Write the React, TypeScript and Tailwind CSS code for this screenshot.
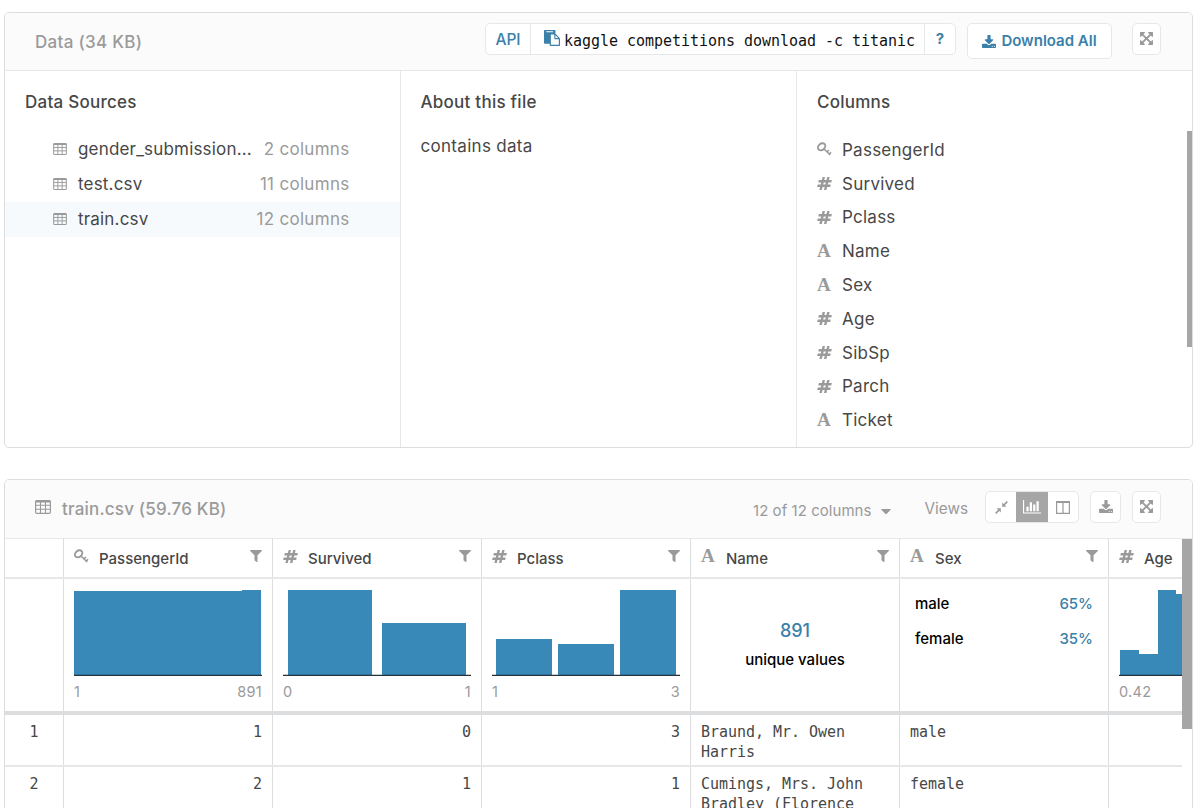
import type { ReactNode } from 'react'
import clsx from 'clsx'
import { FaCaretDown, FaFilter } from 'react-icons/fa'

type ColumnType = 'key' | 'number' | 'text'

const files = [
  { name: 'gender_submission...', columns: '2 columns' },
  { name: 'test.csv', columns: '11 columns' },
  { name: 'train.csv', columns: '12 columns' },
]

const columns: { name: string; type: ColumnType }[] = [
  { name: 'PassengerId', type: 'key' },
  { name: 'Survived', type: 'number' },
  { name: 'Pclass', type: 'number' },
  { name: 'Name', type: 'text' },
  { name: 'Sex', type: 'text' },
  { name: 'Age', type: 'number' },
  { name: 'SibSp', type: 'number' },
  { name: 'Parch', type: 'number' },
  { name: 'Ticket', type: 'text' },
]

const rows = [
  ['1', '1', '0', '3', 'Braund, Mr. Owen Harris', 'male', ''],
  ['2', '2', '1', '1', 'Cumings, Mrs. John Bradley (Florence', 'female', ''],
]

const grid = 'grid grid-cols-[59px_209px_209px_209px_209px_209px_209px]'

function TableIcon({ className }: { className?: string }) {
  return (
    <svg viewBox="0 0 16 14" className={className} fill="none" stroke="currentColor">
      <rect x="0.6" y="0.6" width="14.8" height="12.8" rx="1.2" strokeWidth="1.2" />
      <path d="M0.6 1.4h14.8" strokeWidth="2" />
      <path d="M0.6 5.2h14.8M0.6 9.2h14.8M5.5 1v12.5M10.5 1v12.5" strokeWidth="1.1" />
    </svg>
  )
}

function KeyIcon() {
  return (
    <svg viewBox="0 0 15 15" className="h-[15px] w-[15px]" fill="none" stroke="currentColor">
      <ellipse cx="4.6" cy="4.8" rx="3.1" ry="4" transform="rotate(50 4.6 4.8)" strokeWidth="1.9" />
      <path d="M7 7l6.2 6M9.6 10.4l2.2-2.4M11.8 12.6l2.2-2.4" strokeWidth="1.6" />
    </svg>
  )
}

function HashIcon() {
  return (
    <svg viewBox="32 128 1728 1536" className="h-[13px] w-[15px]" fill="currentColor">
      <path d="M991 1024l64-256h-254l-64 256h254zm768-504l-56 224q-7 24-31 24h-327l-64 256h311q15 0 25 12 10 14 6 28l-56 224q-5 24-31 24h-327l-81 328q-7 24-31 24h-224q-16 0-26-12-9-12-6-28l78-312h-254l-81 328q-7 24-31 24h-225q-15 0-25-12-9-12-6-28l78-312h-311q-15 0-25-12-9-12-6-28l56-224q7-24 31-24h327l64-256h-311q-15 0-25-12-10-14-6-28l56-224q5-24 31-24h327l81-328q7-24 32-24h224q15 0 25 12 9 12 6 28l-78 312h254l81-328q7-24 32-24h224q15 0 25 12 9 12 6 28l-78 312h311q15 0 25 12 9 12 6 28z" />
    </svg>
  )
}

function DownloadIcon() {
  return (
    <svg viewBox="64 0 1664 1536" className="h-[13px] w-[14px]" fill="currentColor">
      <path d="M1344 1344q0-26-19-45t-45-19-45 19-19 45 19 45 45 19 45-19 19-45zm256 0q0-26-19-45t-45-19-45 19-19 45 19 45 45 19 45-19 19-45zm128-224v320q0 40-28 68t-68 28h-1472q-40 0-68-28t-28-68v-320q0-40 28-68t68-28h465l135 136q58 56 136 56t136-56l136-136h464q40 0 68 28t28 68zm-325-569q17 41-14 70l-448 448q-18 19-45 19t-45-19l-448-448q-31-29-14-70 17-39 59-39h256v-448q0-26 19-45t45-19h256q26 0 45 19t19 45v448h256q42 0 59 39z" />
    </svg>
  )
}

function ExpandIcon() {
  return (
    <svg viewBox="128 128 1536 1536" className="h-[13px] w-[13px]" fill="currentColor">
      <path d="M1411 541l-355 355 355 355 144-144q29-31 70-14 39 17 39 59v448q0 26-19 45t-45 19h-448q-42 0-59-40-17-39 14-69l144-144-355-355-355 355 144 144q31 30 14 69-17 40-59 40h-448q-26 0-45-19t-19-45v-448q0-42 40-59 39-17 69 14l144 144 355-355-355-355-144 144q-19 19-45 19-12 0-24-5-40-17-40-59v-448q0-26 19-45t45-19h448q42 0 59 40 17 39-14 69l-144 144 355 355 355-355-144-144q-31-30-14-69 17-40 59-40h448q26 0 45 19t19 45v448q0 42-39 59-13 5-25 5-26 0-45-19z" />
    </svg>
  )
}

function PasteIcon() {
  return (
    <svg viewBox="0 0 1792 1792" className="-mt-0.5 mr-1 h-4 w-4 shrink-0 text-[#3b80a8]" fill="currentColor">
      <path d="M768 1664h896v-640h-416q-40 0-68-28t-28-68v-416h-384v1152zm256-1440v-64q0-13-9.5-22.5t-22.5-9.5h-704q-13 0-22.5 9.5t-9.5 22.5v64q0 13 9.5 22.5t22.5 9.5h704q13 0 22.5-9.5t9.5-22.5zm256 672h299l-299-299v299zm512 128v672q0 40-28 68t-68 28h-960q-40 0-68-28t-28-68v-160h-544q-40 0-68-28t-28-68v-1344q0-40 28-68t68-28h1088q40 0 68 28t28 68v328q21 13 36 28l408 408q28 28 48 76t20 88z" />
    </svg>
  )
}

function BarChartIcon() {
  return (
    <svg viewBox="0 128 2048 1536" className="h-[13.5px] w-[18px]" fill="currentColor">
      <path d="M640 896v512h-256v-512h256zm384-512v1024h-256v-1024h256zm1024 1152v128h-2048v-1536h128v1408h1920zm-640-896v768h-256v-768h256zm384-384v1152h-256v-1152h256z" />
    </svg>
  )
}

function CompressIcon() {
  return (
    <svg viewBox="0 0 13 13" className="h-[13px] w-[13px]" fill="currentColor">
      <path d="M7.2 1.6v4.2h4.2zM5.8 11.4V7.2H1.6z" />
      <path d="M8.5 4.5L12.3 0.7M4.5 8.5L0.7 12.3" stroke="currentColor" strokeWidth="1.7" />
    </svg>
  )
}

function ColumnsIcon() {
  return (
    <svg viewBox="0 0 14 13" className="h-[13px] w-[14px]" fill="none" stroke="currentColor" strokeWidth="1.2">
      <path d="M0.6 0.6h12.8v11.8H0.6zM7 0.6v11.8" />
      <path d="M0.6 1.2h12.8" strokeWidth="1.8" />
    </svg>
  )
}

function TypeIcon({ type }: { type: ColumnType }) {
  return (
    <span className="flex h-4 w-4 shrink-0 items-center text-[#9a9a9a]">
      {type === 'key' && <KeyIcon />}
      {type === 'number' && <HashIcon />}
      {type === 'text' && <span className="font-['Liberation_Serif',serif] text-[19px] leading-4 font-bold">A</span>}
    </span>
  )
}

function IconButton({ children, className }: { children: ReactNode; className?: string }) {
  return (
    <button className={clsx('flex h-8 items-center justify-center rounded-[5px] border border-[#e6e7e8] bg-white pb-0.5 text-[#9a9a9a]', className)}>
      {children}
    </button>
  )
}

type Bar = { x: number; y: number; w: number }

function Histogram({ bars, min, max }: { bars: Bar[]; min: string; max?: string }) {
  return (
    <div className="pt-2.5 pl-2.5">
      <svg width="188" height="88" viewBox="0 0 188 88" className="block">
        {bars.map((b) => (
          <rect key={b.x} x={b.x} y={b.y} width={b.w} height={86 - b.y} fill="#3888b8" shapeRendering="crispEdges" />
        ))}
        <path d="M0 86.4h188" stroke="#26333b" strokeWidth="1.3" />
      </svg>
      <div className="flex w-[188px] justify-between pt-[5px] text-[14.5px] leading-5 tracking-[0.3px] text-[#9a9a9a]">
        <span>{min}</span>
        {max && <span>{max}</span>}
      </div>
    </div>
  )
}

function ColumnSummary({ name }: { name: string }) {
  switch (name) {
    case 'PassengerId':
      return <Histogram min="1" max="891" bars={[{ x: 0, y: 2, w: 168 }, { x: 168, y: 1, w: 19 }]} />
    case 'Survived':
      return <Histogram min="0" max="1" bars={[{ x: 5, y: 1, w: 84 }, { x: 99, y: 34, w: 84 }]} />
    case 'Pclass':
      return <Histogram min="1" max="3" bars={[{ x: 4, y: 50, w: 56 }, { x: 66, y: 55, w: 56 }, { x: 128, y: 1, w: 56 }]} />
    case 'Name':
      return (
        <div className="flex flex-col items-center pt-10">
          <div className="text-[18px] leading-6 font-medium text-[#3b80a8]">891</div>
          <div className="mt-[7px] text-[15px] leading-5 font-medium text-black">unique values</div>
        </div>
      )
    case 'Sex':
      return (
        <div className="flex flex-col gap-[15px] px-[15px] pt-[15px] text-[15px] leading-5 font-medium">
          <div className="flex justify-between">
            <span className="text-black">male</span>
            <span className="text-[#3b80a8]">65%</span>
          </div>
          <div className="flex justify-between">
            <span className="text-black">female</span>
            <span className="text-[#3b80a8]">35%</span>
          </div>
        </div>
      )
    default:
      return (
        <Histogram
          min="0.42"
          bars={[{ x: 1, y: 61, w: 19 }, { x: 20, y: 65, w: 19 }, { x: 39, y: 1, w: 18 }, { x: 57, y: 5, w: 19 }]}
        />
      )
  }
}

function DataPanel() {
  return (
    <section className="h-[436px] w-[1189px] overflow-hidden rounded-[5px] border border-[#dcdddf]">
      <header className="flex h-[58px] items-start border-b border-[#e6e7e8] bg-[#fbfbfb] pt-[10px] pr-[31px] pl-[30px]">
        <h2 className="mr-auto pt-[7px] text-[17px] leading-6 font-medium tracking-[0.3px] text-[#9a9a9a]">Data (34 KB)</h2>
        <div className="flex h-8 w-[471px] rounded-[5px] border border-[#e6e7e8] bg-white">
          <div className="flex w-[45px] items-center justify-center border-r border-[#e6e7e8] pt-0.5 text-[15.5px] font-medium text-[#3b80a8]">API</div>
          <div className="flex flex-1 items-center pl-[13px]">
            <PasteIcon />
            <code className="pt-1 font-['DejaVu_Sans_Mono',monospace] text-[15px] tracking-[-0.03px] whitespace-nowrap text-[#111]">kaggle competitions download -c titanic</code>
          </div>
          <div className="flex w-[31px] items-center justify-center border-l border-[#e6e7e8] text-[15px] font-bold text-[#3b80a8]">?</div>
        </div>
        <button className="ml-[11px] flex h-9 w-[145px] items-center justify-center gap-[5px] rounded-[5px] border border-[#e6e7e8] bg-white text-[15px] font-semibold text-[#3b80a8]">
          <DownloadIcon />
          Download All
        </button>
        <IconButton className="ml-5 w-[29px]">
          <ExpandIcon />
        </IconButton>
      </header>

      <div className="flex h-[376px] text-[17px] leading-6 text-[#474747]">
        <div className="w-[395.5px] border-r border-[#e6e7e8] pt-[19px]">
          <h3 className="pl-5 font-medium tracking-[0.25px]">Data Sources</h3>
          <ul className="mt-[18px]">
            {files.map((file, i) => (
              <li key={file.name} className={clsx('flex h-[35px] items-center pr-[50px] pb-0.5 pl-12', i === 2 && 'bg-[#f6fafd]')}>
                <TableIcon className="mr-[11px] h-3 w-[14px] text-[#9a9a9a]" />
                <span className="tracking-[0.18px]">{file.name}</span>
                <span className="ml-auto tracking-[0.3px] text-[#9a9a9a]">{file.columns}</span>
              </li>
            ))}
          </ul>
        </div>
        <div className="w-[396.5px] border-r border-[#e6e7e8] pt-[19px] pl-5">
          <h3 className="font-medium tracking-[0.25px]">About this file</h3>
          <p className="mt-5 tracking-[0.3px]">contains data</p>
        </div>
        <div className="flex flex-1 justify-between pl-5">
          <div className="pt-[19px]">
            <h3 className="font-medium tracking-[0.25px]">Columns</h3>
            <ul className="mt-[19px]">
              {columns.map((column) => (
                <li key={column.name} className="flex h-[33.8px] items-center gap-[9px] tracking-[0.25px]">
                  <TypeIcon type={column.type} />
                  {column.name}
                </li>
              ))}
            </ul>
          </div>
          <div className="mt-[60px] h-[216px] w-[5px] bg-[#a6a6a6]" />
        </div>
      </div>
    </section>
  )
}

function PreviewPanel() {
  return (
    <section className="mt-[31px] h-[360px] w-[1189px] overflow-hidden rounded-t-[5px] border border-[#dcdddf]">
      <header className="flex h-[59px] items-start border-b border-[#e6e7e8] bg-[#fbfbfb] pt-[11px] pr-[31px] pl-[30px]">
        <TableIcon className="mt-[9px] h-[14px] w-4 text-[#9a9a9a]" />
        <h2 className="mr-auto ml-[11px] pt-[6px] text-[17px] leading-6 font-medium tracking-[0.2px] text-[#9a9a9a]">train.csv (59.76 KB)</h2>
        <div className="flex items-center gap-[9px] pt-2 text-[15px] leading-6 tracking-[0.05px] text-[#9a9a9a]">
          12 of 12 columns
          <FaCaretDown className="h-4 w-[10px]" />
        </div>
        <div className="ml-[34px] pt-[6px] text-[15.3px] leading-6 text-[#9a9a9a]">Views</div>
        <div className="ml-[17px] flex h-8 w-[94px] overflow-hidden rounded-[5px] border border-[#e6e7e8] bg-white text-[#9a9a9a]">
          <div className="flex w-[30px] items-center justify-center">
            <CompressIcon />
          </div>
          <div className="flex w-8 items-center justify-center bg-[#a6a6a6] text-white">
            <BarChartIcon />
          </div>
          <div className="flex flex-1 items-center justify-center">
            <ColumnsIcon />
          </div>
        </div>
        <IconButton className="ml-[11px] w-[31px]">
          <DownloadIcon />
        </IconButton>
        <IconButton className="ml-[11px] w-[29px]">
          <ExpandIcon />
        </IconButton>
      </header>

      <div className="flex">
        <div className="w-[1177px] overflow-hidden">
          <div className={clsx(grid, 'h-10 border-b-2 border-[#e6e7e8]')}>
            <div className="border-r border-[#dcdddf]" />
            {columns.slice(0, 6).map((column) => (
              <div key={column.name} className="flex items-start border-r border-[#dcdddf] px-2.5">
                <div className="pt-[9px]">
                  <TypeIcon type={column.type} />
                </div>
                <span className="ml-[9px] pt-[9px] text-[15px] leading-[22px] font-medium text-[#474747]">{column.name}</span>
                <FaFilter className="mt-[11px] ml-auto h-3 w-3 text-[#9a9a9a]" />
              </div>
            ))}
          </div>
          <div className={clsx(grid, 'h-[136px] border-b-4 border-[#dcdddf]')}>
            <div className="border-r border-[#dcdddf]" />
            {columns.slice(0, 6).map((column) => (
              <div key={column.name} className="border-r border-[#dcdddf]">
                <ColumnSummary name={column.name} />
              </div>
            ))}
          </div>
          {rows.map((row) => (
            <div key={row[0]} className={clsx(grid, 'h-[52px] border-b-2 border-[#e6e7e8] text-[15px] leading-5 text-[#474747]')}>
              {row.map((value, i) => (
                <div
                  key={i}
                  className={clsx(
                    "overflow-hidden border-r border-[#dcdddf] px-2.5 pt-[7px] font-['DejaVu_Sans_Mono',monospace] tracking-[-0.03px]",
                    i === 0 && 'text-center',
                    i > 0 && i < 4 && 'text-right',
                  )}
                >
                  {value}
                </div>
              ))}
            </div>
          ))}
        </div>
        <div className="h-[190px] w-[10px] bg-[#a6a6a6]" />
      </div>
    </section>
  )
}

export default function App() {
  return (
    <main className="h-[808px] w-[1200px] overflow-hidden bg-white pt-3 pl-1 font-['Inter',sans-serif]">
      <DataPanel />
      <PreviewPanel />
    </main>
  )
}
